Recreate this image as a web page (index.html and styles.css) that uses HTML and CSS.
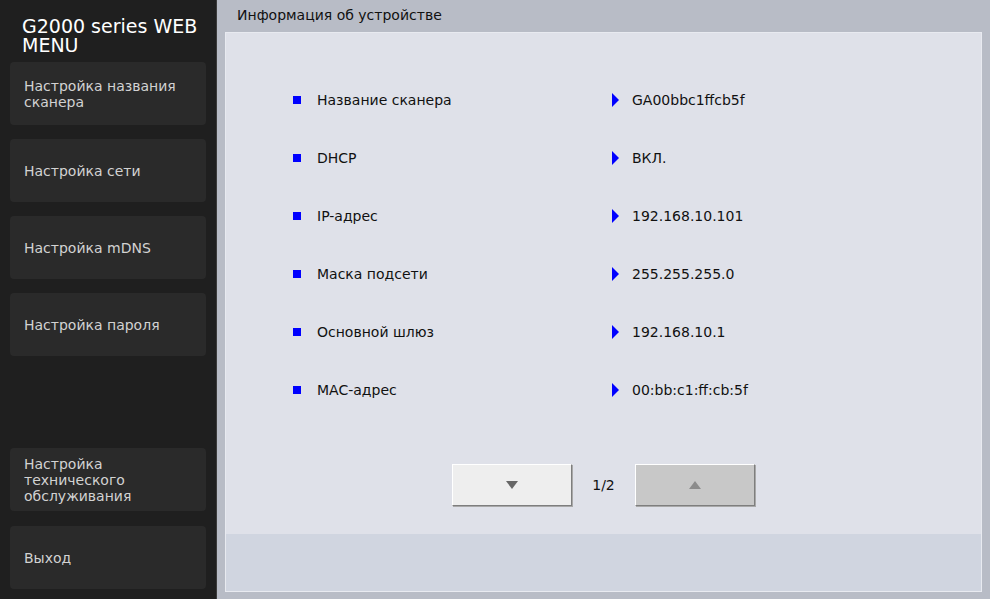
FILE: index.html
```html
<!DOCTYPE html>
<html lang="ru">
<head>
<meta charset="UTF-8">
<meta name="viewport" content="width=device-width, initial-scale=1.0">
<title>G2000 series WEB MENU</title>
<link rel="stylesheet" href="styles.css">
</head>
<body>
<div class="page">
    <!-- Left menu -->
    <div class="sidebar">
        <div class="title">G2000 series WEB MENU</div>
        <div class="nav">
            <a class="navItem">Настройка названия сканера</a>
            <a class="navItem">Настройка сети</a>
            <a class="navItem">Настройка mDNS</a>
            <a class="navItem">Настройка пароля</a>
        </div>
        <div class="nav navBottom">
            <a class="navItem">Настройка технического обслуживания</a>
            <a class="navItem">Выход</a>
        </div>
    </div>

    <!-- Main area -->
    <div class="main">
        <div class="header">Информация об устройстве</div>
        <div class="panel">
            <div class="content">
                <div class="info">
                    <div class="row"><span class="label">Название сканера</span><span class="value">GA00bbc1ffcb5f</span></div>
                    <div class="row"><span class="label">DHCP</span><span class="value">ВКЛ.</span></div>
                    <div class="row"><span class="label">IP-адрес</span><span class="value">192.168.10.101</span></div>
                    <div class="row"><span class="label">Маска подсети</span><span class="value">255.255.255.0</span></div>
                    <div class="row"><span class="label">Основной шлюз</span><span class="value">192.168.10.1</span></div>
                    <div class="row"><span class="label">MAC-адрес</span><span class="value">00:bb:c1:ff:cb:5f</span></div>
                </div>
                <div class="pager">
                    <button class="pageBtn"><span class="triDown"></span></button>
                    <span class="pageNum">1/2</span>
                    <button class="pageBtn disabled"><span class="triUp"></span></button>
                </div>
            </div>
            <div class="footer"></div>
        </div>
    </div>
</div>
</body>
</html>
```

FILE: styles.css
```css
body {
    margin: 0;
    background: #b8bcc6;
    font-family: "DejaVu Sans", sans-serif;
}

.page {
    display: flex;
    height: 599px;
    overflow: hidden;
}

/* Left menu */
.sidebar {
    width: 196px;
    padding: 0 10px 10px 10px;
    background: #1f1f1f;
    border-right: 1px solid #3c3c3c;
    display: flex;
    flex-direction: column;
}

.title {
    flex-shrink: 0;
    height: 62px;
    padding: 17px 0 0 12px;
    box-sizing: border-box;
    color: #ffffff;
    font-size: 19px;
    line-height: 19px;
}

.nav {
    display: flex;
    flex-direction: column;
    gap: 14px;
}

.navBottom {
    margin-top: auto;
    gap: 15px;
}

.navItem {
    height: 63px;
    flex-shrink: 0;
    padding: 0 14px;
    display: flex;
    align-items: center;
    background: #2a2a2a;
    border-radius: 4px;
    color: #d2d2d2;
    font-size: 14px;
    line-height: 16px;
    cursor: pointer;
}

/* Main area */
.main {
    flex: 1;
    display: flex;
    flex-direction: column;
    background: #b8bcc6;
}

.header {
    height: 32px;
    padding: 0 0 2px 20px;
    box-sizing: border-box;
    line-height: 30px;
    font-size: 14px;
    color: #111111;
}

.panel {
    flex: 1;
    margin: 0 8px 7px 8px;
    border: 1px solid #e8eaf0;
    display: flex;
    flex-direction: column;
}

.content {
    flex: 1;
    background: #dfe1e9;
    padding: 38px 0 0 67px;
}

.footer {
    height: 57px;
    background: #d0d5e0;
}

.info {
    display: flex;
    flex-direction: column;
}

.row {
    height: 58px;
    display: flex;
    align-items: center;
    font-size: 14px;
    color: #111111;
}

.label {
    width: 319px;
    display: flex;
    align-items: center;
}

.label::before {
    content: "";
    width: 8px;
    height: 8px;
    margin-right: 16px;
    background: #0000ff;
}

.value {
    display: flex;
    align-items: center;
}

.value::before {
    content: "";
    width: 0;
    height: 0;
    margin-right: 13px;
    border-top: 7px solid transparent;
    border-bottom: 7px solid transparent;
    border-left: 7px solid #0000ff;
}

/* Pagination */
.pager {
    margin: 45px 0 0 -67px;
    display: flex;
    justify-content: center;
    align-items: center;
    gap: 20px;
}

.pageBtn {
    width: 120px;
    height: 42px;
    padding: 0;
    background: #eeeeee;
    border: 1px solid;
    border-color: #ffffff #7e7e7e #7e7e7e #ffffff;
    box-shadow: 1px 1px 0 #a8a8a8;
    display: flex;
    justify-content: center;
    align-items: center;
    cursor: pointer;
}

.pageBtn.disabled {
    background: #c8c8c8;
    cursor: default;
}

.pageNum {
    font-size: 14px;
    color: #111111;
}

.triDown {
    width: 0;
    height: 0;
    border-left: 6px solid transparent;
    border-right: 6px solid transparent;
    border-top: 8px solid #666666;
}

.triUp {
    width: 0;
    height: 0;
    border-left: 6px solid transparent;
    border-right: 6px solid transparent;
    border-bottom: 8px solid #8c8c8c;
}
```
